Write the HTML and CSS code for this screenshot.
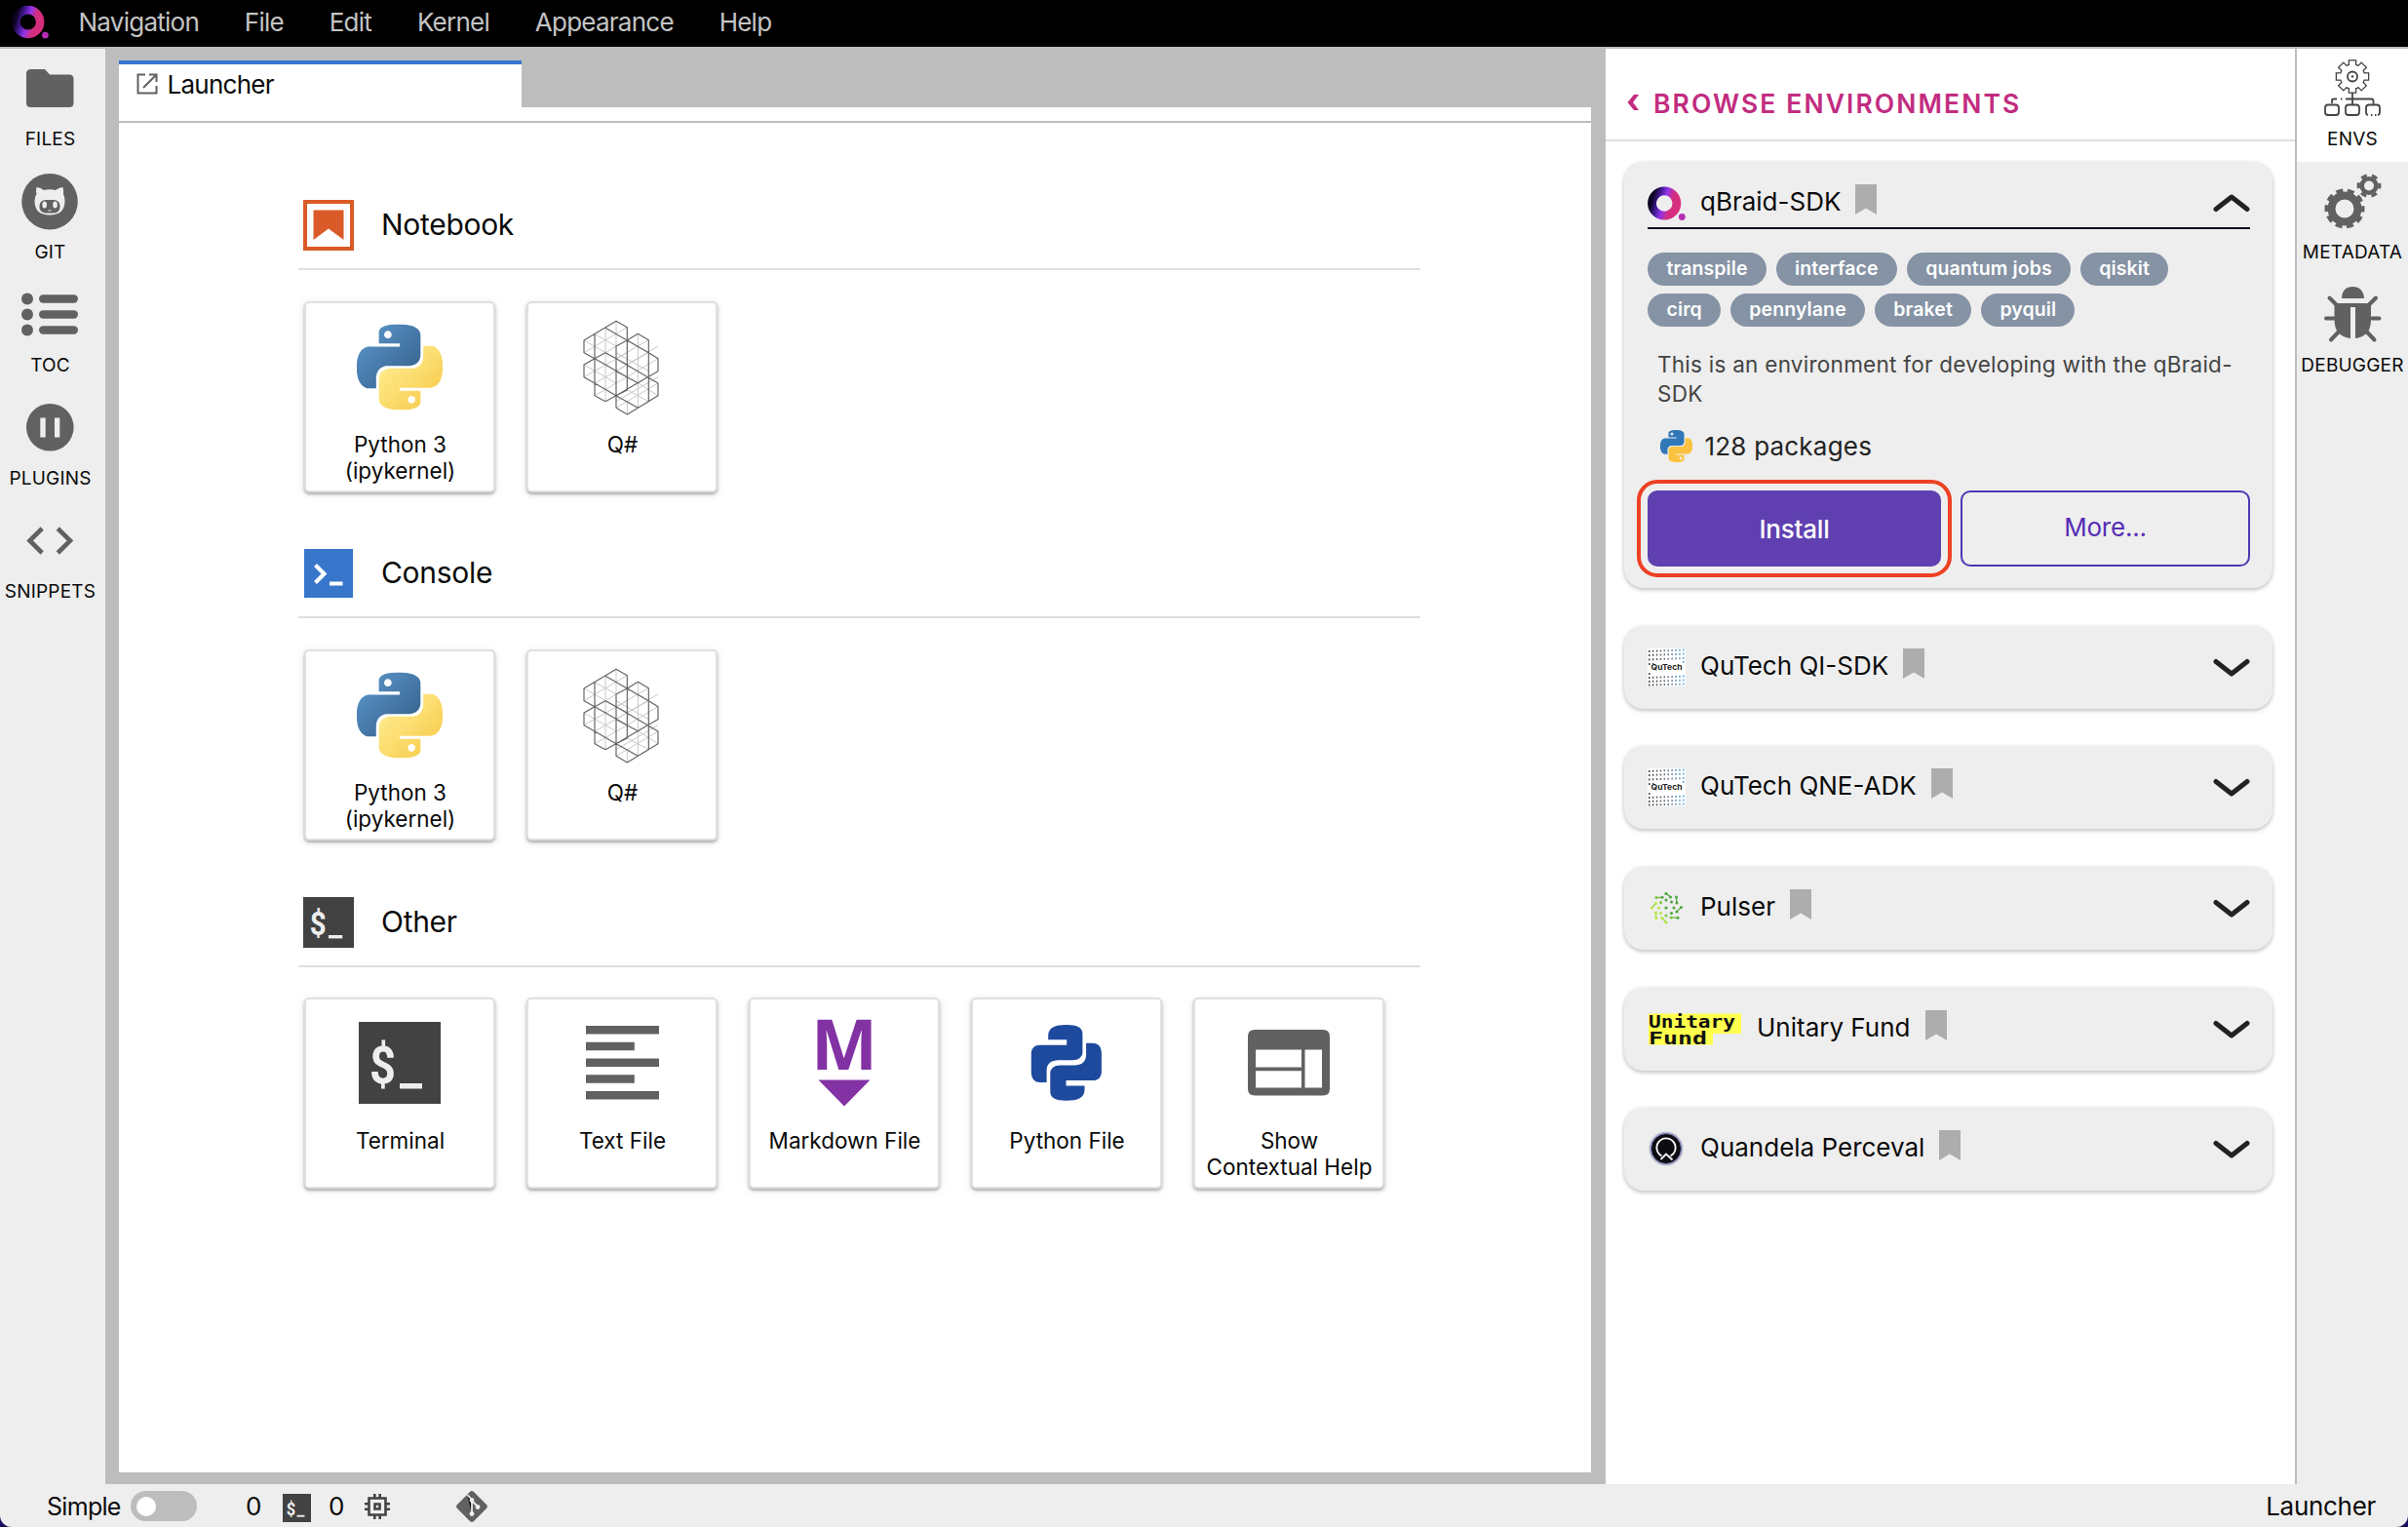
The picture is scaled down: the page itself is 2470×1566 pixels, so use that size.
FILE: index.html
```html
<!DOCTYPE html>
<html lang="en">
<head>
<meta charset="utf-8">
<title>Launcher</title>
<link rel="stylesheet" href="styles.css">
</head>
<body>
<svg class="defs" width="0" height="0">
  <defs>
    <linearGradient id="pyBlue" x1="0" y1="0" x2="1" y2="1"><stop offset="0" stop-color="#5f9bd0"/><stop offset="1" stop-color="#305a85"/></linearGradient>
    <linearGradient id="pyYellow" x1="0" y1="0" x2="1" y2="1"><stop offset=".2" stop-color="#ffe98a"/><stop offset="1" stop-color="#f5c741"/></linearGradient>
    <linearGradient id="ring" x1="0" y1=".3" x2="1" y2=".6"><stop offset="0" stop-color="#0b0320"/><stop offset=".28" stop-color="#4a1aa0"/><stop offset=".5" stop-color="#9333ea"/><stop offset=".75" stop-color="#d12f83"/><stop offset="1" stop-color="#d82d7c"/></linearGradient>
    <linearGradient id="pulse" x1="0" y1="1" x2="1" y2="0"><stop offset="0" stop-color="#c2ee4a"/><stop offset="1" stop-color="#2f8f3a"/></linearGradient>
    <linearGradient id="dots" x1="0" y1="0" x2="1" y2="0"><stop offset="0" stop-color="#444"/><stop offset=".5" stop-color="#778"/><stop offset="1" stop-color="#58b2e0"/></linearGradient>
    <path id="pyTop" d="M14.25.18l.9.2.73.26.59.3.45.32.34.34.25.34.16.33.1.3.04.26.02.2-.01.13V8.5l-.05.63-.13.55-.21.46-.26.38-.3.31-.33.25-.35.19-.35.14-.33.1-.3.07-.26.04-.21.02H8.77l-.69.05-.59.14-.5.22-.41.27-.33.32-.27.35-.2.36-.15.37-.1.35-.07.32-.04.27-.02.21v3.06H3.17l-.21-.03-.28-.07-.32-.12-.35-.18-.36-.26-.36-.36-.35-.46-.32-.59-.28-.73-.21-.88-.14-1.05-.05-1.23.06-1.22.16-1.04.24-.87.32-.71.36-.57.4-.44.42-.33.42-.24.4-.16.36-.1.32-.05.24-.01h.16l.06.01h8.16v-.83H6.18l-.01-2.75-.02-.37.05-.34.11-.31.17-.28.25-.26.31-.23.38-.2.44-.18.51-.15.58-.12.64-.1.71-.06.77-.04.84-.02 1.27.05zM7.95 2.16l-.23.33-.08.41.08.41.23.34.33.22.41.09.41-.09.33-.22.23-.34.08-.41-.08-.41-.23-.33-.33-.22-.41-.09-.41.09z"/>
    <path id="pyBottom" d="M21.04 6.11l.28.06.32.12.35.18.36.27.36.35.35.47.32.59.28.73.21.88.14 1.04.05 1.23-.06 1.23-.16 1.04-.24.86-.32.71-.36.57-.4.45-.42.33-.42.24-.4.16-.36.09-.32.05-.24.02-.16-.01h-8.22v.82h5.84l.01 2.76.02.36-.05.34-.11.31-.17.29-.25.25-.31.24-.38.2-.44.17-.51.15-.58.13-.64.09-.71.07-.77.04-.84.01-1.27-.04-1.07-.14-.9-.2-.73-.25-.59-.3-.45-.33-.34-.34-.25-.34-.16-.33-.1-.3-.04-.25-.02-.2.01-.13v-5.34l.05-.64.13-.54.21-.46.26-.38.3-.32.33-.24.35-.2.35-.14.33-.1.3-.06.26-.04.21-.02.13-.01h5.84l.69-.05.59-.14.5-.21.41-.28.33-.32.27-.35.2-.36.15-.36.1-.35.07-.32.04-.28.02-.21V6.07h2.09l.14.01zM14.57 20.36l-.23.33-.08.41.08.41.23.33.33.23.41.08.41-.08.33-.23.23-.33.08-.41-.08-.41-.23-.33-.33-.23-.41-.08-.41.08z"/>
    <symbol id="python" viewBox="0 0 24 24"><use href="#pyTop" fill="url(#pyBlue)"/><use href="#pyBottom" fill="url(#pyYellow)"/></symbol>
    <symbol id="pythonFlat" viewBox="0 0 24 24"><use href="#pyTop" fill="#3178b8"/><use href="#pyBottom" fill="#fbc23f"/></symbol>
    <symbol id="qsharp" viewBox="923 436 240 300">
      <path fill="none" stroke="#c9c9c9" stroke-width="3" d="M995 464V690M929 540L1062 462M962 483L1028 520L995 540M929 502L1028 558M929 577L962 558M929 615L1062 540M962 634L1062 577M962 672L1062 615M929 577L1028 634M1095 482V710M1028 443V520M1062 502L1128 540L1157 558M1028 558L1128 501M1028 597L1157 520M1062 615L1157 558M1028 540L1128 597M1028 690L1157 615M1028 710L1157 634M1062 655L1128 690M1095 633L1157 672M1062 690V730M1062 577L1128 540"/>
      <path fill="none" stroke="#666" stroke-width="3.6" stroke-linejoin="round" d="M929 502L1028 443L1062 462V502L1095 482L1128 501V540L1157 558V597L1125 615L1157 634V672L1062 730L1028 710V672L995 690L962 672V634L929 615V577L962 558L929 540ZM962 483V634L1028 672M995 464L1128 540M1062 502L1028 520V672L1062 655V502M962 558L995 540L1062 577M962 558L1062 615M1028 558L1125 615L1095 633L1028 597M1128 540V690L1095 710L1028 672L1062 655M962 558L929 540M1028 672L1125 615"/>
    </symbol>
    <symbol id="terminal" viewBox="0 0 84 84"><rect width="84" height="84" fill="#424242"/><text class="dollar" x="11" y="63" font-size="54" textLength="27" lengthAdjust="spacingAndGlyphs">$</text><rect x="42" y="63" width="23" height="5.5" fill="#eee"/></symbol>
    <symbol id="bookmark" viewBox="0 0 22 31"><path d="M0 0H22V31L11 24.500L0 31Z" fill="#adadad"/></symbol>
    <symbol id="down" viewBox="0 0 38 20"><path d="M3 3.500L19 16L35 3.500" fill="none" stroke="#222" stroke-width="5" stroke-linecap="round" stroke-linejoin="round"/></symbol>
    <symbol id="qbraid" viewBox="0 0 39 36"><circle cx="17.200" cy="17.500" r="12.700" fill="none" stroke="url(#ring)" stroke-width="8.800"/><circle cx="35.300" cy="31.500" r="3.400" fill="#b42fb4"/></symbol>
    <symbol id="qutech" viewBox="0 0 39 39"><rect width="39" height="39" fill="#fff"/>
      <path fill="none" stroke="url(#dots)" stroke-width="2" stroke-dasharray="1.500 2.400" d="M1 3L38 1.500M1 7L38 5.500M1 11.500L38 10M1 16L7 15.800M1 30L38 28.500M1 34L38 32.500M1 37.500L38 36.500M36 14L38 14M1 26L3 26"/>
      <text class="tech" x="3.500" y="21.500" font-size="7.500" textLength="32" lengthAdjust="spacingAndGlyphs">QuTech</text></symbol>
  </defs>
</svg>

<div class="app">
  <header class="menubar">
    <svg class="brand" viewBox="0 0 39 36"><use href="#qbraid"/></svg>
    <nav class="menu"><span>Navigation</span><span>File</span><span>Edit</span><span>Kernel</span><span>Appearance</span><span>Help</span></nav>
  </header>

  <div class="workspace">
    <aside class="side left">
      <div class="side-item">
        <svg viewBox="0 0 108 80"><path fill="#616161" d="M32 21H46L51 26.500H71Q75.500 26.500 75.500 31V55.500Q75.500 60 71 60H31.500Q27 60 27 55.500V25.500Q27 21 32 21Z"/></svg><span>FILES</span></div>
      <div class="side-item">
        <svg viewBox="0 0 108 80"><circle cx="51" cy="40.700" r="28.800" fill="#616161"/><path fill="#eee" d="M37.500 26Q41 26 45 29Q51 27.500 57 29Q61 26 64.500 26Q65.500 30 65 33Q66.500 36 66.500 40Q66.500 54.500 51 54.500Q35.500 54.500 35.500 40Q35.500 36 37.500 33Q36.500 30 37.500 26Z"/><rect x="40.500" y="39" width="21" height="13.500" rx="6" fill="#616161"/><ellipse cx="45.700" cy="44" rx="2.300" ry="3.600" fill="#eee"/><ellipse cx="56.500" cy="44" rx="2.300" ry="3.600" fill="#eee"/><path d="M49.500 49.500Q51 51 52.500 49.500" stroke="#eee" fill="none"/></svg><span>GIT</span></div>
      <div class="side-item">
        <svg viewBox="0 0 108 80"><g fill="#616161"><circle cx="28" cy="24.500" r="6"/><circle cx="28" cy="40.500" r="6"/><circle cx="28" cy="56.500" r="6"/><rect x="40" y="20.300" width="40" height="8.500" rx="4.200"/><rect x="40" y="36.300" width="40" height="8.500" rx="4.200"/><rect x="40" y="52.300" width="40" height="8.500" rx="4.200"/></g></svg><span>TOC</span></div>
      <div class="side-item">
        <svg viewBox="0 0 108 80"><circle cx="51.300" cy="40.300" r="24.300" fill="#616161"/><path fill="#eee" d="M41.300 30.500H46.700V50.500H41.300ZM56 30.500H61.300V50.500H56Z"/></svg><span>PLUGINS</span></div>
      <div class="side-item">
        <svg viewBox="0 0 108 80"><path fill="none" stroke="#616161" stroke-width="4.600" d="M43.200 28L30.500 40.500L43.200 53M59.300 28L72 40.500L59.300 53"/></svg><span>SNIPPETS</span></div>
    </aside>

    <main class="dock">
      <div class="tabs"><div class="tab">
        <svg class="tab-icon" viewBox="0 0 22 22" fill="none" stroke="#616161" stroke-width="2"><path d="M9 1.500H1.500V20.500H20.500V13M13 1.500H20.500V9M20.500 1.500L7 15"/></svg><span>Launcher</span></div></div>
      <div class="toolbar"></div>
      <div class="launcher">
        <section>
          <h2><svg viewBox="0 0 52 52"><rect x="2" y="2" width="48" height="48" fill="#fff" stroke="#da5b27" stroke-width="4"/><path fill="#da5b27" d="M10.500 10.500H41.500V41L26 29.500L10.500 41Z"/></svg><span>Notebook</span></h2>
          <div class="cards">
            <div class="card"><svg viewBox="0 0 100 100"><use href="#python" x="6" y="5.500" width="88" height="88"/></svg><p>Python 3<br>(ipykernel)</p></div>
            <div class="card"><svg viewBox="0 0 100 100"><use href="#qsharp" x="9" y="0" width="80" height="100"/></svg><p>Q#</p></div>
          </div>
        </section>
        <section>
          <h2><svg viewBox="0 0 52 52"><rect x="1" y="1" width="50" height="50" fill="#3776cb"/><path fill="none" stroke="#fff" stroke-width="4.200" d="M12.500 17.500L21.500 26.500L12.500 35.500"/><rect x="27" y="34.500" width="13.500" height="4" fill="#fff"/></svg><span>Console</span></h2>
          <div class="cards">
            <div class="card"><svg viewBox="0 0 100 100"><use href="#python" x="6" y="5.500" width="88" height="88"/></svg><p>Python 3<br>(ipykernel)</p></div>
            <div class="card"><svg viewBox="0 0 100 100"><use href="#qsharp" x="9" y="0" width="80" height="100"/></svg><p>Q#</p></div>
          </div>
        </section>
        <section>
          <h2><svg viewBox="0 0 52 52"><use href="#terminal" width="52" height="52"/></svg><span>Other</span></h2>
          <div class="cards">
            <div class="card"><svg viewBox="0 0 100 100"><use href="#terminal" x="8" y="7" width="84" height="84"/></svg><p>Terminal</p></div>
            <div class="card"><svg viewBox="0 0 100 100"><path fill="#616161" d="M13 11H88V19.500H13ZM13 27.700H62.800V36.200H13ZM13 44.500H88V53H13ZM13 61.200H62.800V69.700H13ZM13 78H88V86.500H13Z"/></svg><p>Text File</p></div>
            <div class="card"><svg viewBox="0 0 100 100"><text class="md" x="16" y="56" font-size="72" textLength="68" lengthAdjust="spacingAndGlyphs">M</text><path fill="#8332a4" d="M23.500 66.500H76.500L50 93.500Z"/></svg><p>Markdown File</p></div>
            <div class="card"><svg viewBox="0 0 100 100"><g fill="#1e4a9e" transform="translate(13 10)"><path id="half" d="M18.200 15.300V11C18.200 3 25 0 37.200 0C48 0 53.400 3 53.400 9V28.300C53.400 33 49 36.300 43.500 36.300H29C21 36.300 16.600 40 16.600 47V59H10C3 59 .8 54 .8 48V30C.8 24 4 20.700 10 20.700H37.200V15.300Z"/><use href="#half" transform="rotate(180 36.850 38.850)"/></g></svg><p>Python File</p></div>
            <div class="card"><svg viewBox="0 0 100 100"><path fill="#616161" fill-rule="evenodd" d="M15 15H85Q92 15 92 22V75.500Q92 82.500 85 82.500H15Q8 82.500 8 75.500V22Q8 15 15 15ZM16 35.500V53.500H63V35.500ZM16 57.200V74.500H63V57.200ZM66.500 35.500V74.500H84V35.500Z"/></svg><p>Show<br>Contextual Help</p></div>
          </div>
        </section>
      </div>
    </main>

    <aside class="envs">
      <h1><svg viewBox="0 0 14 18"><path fill="#c22c80" d="M8 1H13L7 9L13 17H8L1.500 9Z"/></svg><span>BROWSE ENVIRONMENTS</span></h1>
      <div class="env-list">
        <article class="env open">
          <div class="env-head"><svg class="logo" viewBox="0 0 39 39"><use href="#qbraid" y="2" width="39" height="36"/></svg><span class="name">qBraid-SDK</span><svg class="mark"><use href="#bookmark"/></svg><svg class="chev up" viewBox="0 0 38 20"><use href="#down"/></svg></div>
          <div class="tags"><div><b>transpile</b><b>interface</b><b>quantum jobs</b><b>qiskit</b></div><div><b>cirq</b><b>pennylane</b><b>braket</b><b>pyquil</b></div></div>
          <p class="desc">This is an environment for developing with the qBraid-<br>SDK</p>
          <div class="packages"><svg viewBox="0 0 24 24"><use href="#pythonFlat"/></svg><span>128 packages</span></div>
          <div class="actions"><button class="install">Install</button><button class="more">More...</button></div>
        </article>
        <article class="env"><div class="env-head"><svg class="logo" viewBox="0 0 39 39"><use href="#qutech"/></svg><span class="name">QuTech QI-SDK</span><svg class="mark"><use href="#bookmark"/></svg><svg class="chev" viewBox="0 0 38 20"><use href="#down"/></svg></div></article>
        <article class="env"><div class="env-head"><svg class="logo" viewBox="0 0 39 39"><use href="#qutech"/></svg><span class="name">QuTech QNE-ADK</span><svg class="mark"><use href="#bookmark"/></svg><svg class="chev" viewBox="0 0 38 20"><use href="#down"/></svg></div></article>
        <article class="env"><div class="env-head"><svg class="logo" viewBox="0 0 39 39"><g stroke="url(#pulse)" stroke-width="1.300" fill="none"><path d="M19 4L23.500 8M9 8.500L15 8.300M29.500 8L30 14.500M34.500 18.500L30 22.500M24 29L31 29.300M14.500 29L19 34M8.500 23L8.700 29M4 19L8.500 14.500"/></g><g fill="#4aa83c"><circle cx="19" cy="4.500" r="1.600"/><circle cx="23.500" cy="8" r="1.500"/><circle cx="15" cy="8.300" r="1.500"/><circle cx="29.500" cy="8" r="1.500"/><circle cx="30" cy="14" r="1.500"/><circle cx="34.500" cy="18.500" r="1.500"/><circle cx="30" cy="23" r="1.500"/><circle cx="19" cy="11" r="1.500"/><circle cx="24.500" cy="13" r="1.500"/><circle cx="27" cy="19" r="1.500"/><circle cx="19" cy="19" r="1.600"/><circle cx="24.500" cy="24.500" r="1.500"/><circle cx="31" cy="29.300" r="1.500"/></g><g fill="#7fc540"><circle cx="9" cy="8.500" r="1.500"/><circle cx="13.500" cy="13.500" r="1.500"/><circle cx="19" cy="27" r="1.500"/><circle cx="24" cy="29" r="1.500"/></g><g fill="#b4e640"><circle cx="8.500" cy="14.500" r="1.500"/><circle cx="4.500" cy="19" r="1.500"/><circle cx="11.500" cy="19" r="1.500"/><circle cx="8.500" cy="24" r="1.500"/><circle cx="13.500" cy="24.500" r="1.500"/><circle cx="8.700" cy="29.500" r="1.500"/><circle cx="15" cy="29.500" r="1.500"/><circle cx="19" cy="34" r="1.500"/></g></svg><span class="name">Pulser</span><svg class="mark"><use href="#bookmark"/></svg><svg class="chev" viewBox="0 0 38 20"><use href="#down"/></svg></div></article>
        <article class="env"><div class="env-head"><svg class="logo wide" viewBox="0 0 97 39"><path fill="#ffff4d" d="M1 3.500H96V24H67V35.500H1Z"/><text class="uf" x="1" y="17.500" font-size="18" textLength="89" lengthAdjust="spacingAndGlyphs">Unitary</text><text class="uf" x="1" y="35" font-size="18" textLength="60" lengthAdjust="spacingAndGlyphs">Fund</text></svg><span class="name">Unitary Fund</span><svg class="mark"><use href="#bookmark"/></svg><svg class="chev" viewBox="0 0 38 20"><use href="#down"/></svg></div></article>
        <article class="env"><div class="env-head"><svg class="logo" viewBox="0 0 39 39"><circle cx="19" cy="19" r="17.500" fill="#b9bcd0"/><circle cx="19" cy="19" r="15.500" fill="#0c0c10" stroke="#7b78b8"/><path fill="none" stroke="#f5f5f5" stroke-width="1.900" d="M14.500 26.500A9.600 9.600 0 1 1 23.500 26.500M13.500 30L19 24.500L25.500 30.500"/></svg><span class="name">Quandela Perceval</span><svg class="mark"><use href="#bookmark"/></svg><svg class="chev" viewBox="0 0 38 20"><use href="#down"/></svg></div></article>
      </div>
    </aside>

    <aside class="side right">
      <div class="side-item active">
        <svg viewBox="0 0 114 80"><defs><g id="cog8"><circle cx="57" cy="28.500" r="12"/><g id="t2"><rect x="54" y="12.500" width="6" height="32"/><rect x="41" y="25.500" width="32" height="6"/></g><use href="#t2" transform="rotate(45 57 28.500)"/></g></defs>
        <use href="#cog8" fill="none" stroke="#444" stroke-width="2.600"/><use href="#cog8" fill="#fff"/>
        <g fill="none" stroke="#444" stroke-width="1.800"><circle cx="57" cy="28.500" r="5"/><path d="M57 45V57M36 56V53Q36 51.500 38 51.500H41M50 51.500H76.500Q78.500 51.500 78.500 53.500V57"/><rect x="29" y="57.500" width="14" height="10.500" rx="3"/><rect x="50" y="57.500" width="14" height="10.500" rx="3"/><path d="M73 68Q71 67.500 71 65V60.500Q71 57.500 74 57.500H82Q85 57.500 85 60.500V65Q85 67.500 83 68M76 68H77.500M80 68H81.500M45 51.500H46.500"/></g><circle cx="57" cy="28.500" r="1.200" fill="#444"/></svg><span>ENVS</span></div>
      <div class="side-item">
        <svg viewBox="0 0 114 80"><g fill="none" stroke="#616161"><circle cx="49" cy="48" r="13.500" stroke-width="8"/><circle cx="49" cy="48" r="18.500" stroke-width="4" stroke-dasharray="7 4.624" stroke-dashoffset="3.500"/><circle cx="74" cy="24.500" r="7.300" stroke-width="4.600"/><circle cx="74" cy="24.500" r="10.800" stroke-width="3.200" stroke-dasharray="6 5.310" stroke-dashoffset="3"/></g></svg><span>METADATA</span></div>
      <div class="side-item">
        <svg viewBox="0 0 114 80"><path fill="#616161" d="M46 24Q46.500 12 57.300 12Q68 12 69 24ZM38.500 29H76V46Q76 63 60 65V33H55V65Q38.500 63 38.500 46Z"/><path stroke="#616161" stroke-width="4" stroke-linecap="round" d="M33.500 23.500L41 31M81 23.500L73.500 31M30 44.500H38M77 44.500H84.500M35 66.500L44 57M79.500 66.500L70.500 57"/></svg><span>DEBUGGER</span></div>
    </aside>
  </div>

  <footer class="status">
    <span class="simple">Simple</span><i class="toggle"></i>
    <span class="n1">0</span><svg class="st-term" viewBox="0 0 84 84"><use href="#terminal"/></svg><span class="n2">0</span>
    <svg class="st-chip" viewBox="0 0 26 26"><path fill="none" stroke="#424242" stroke-width="2.600" d="M4.500 4.500H21.500V21.500H4.500ZM10.300 0V4M15.700 0V4M10.300 22V26M15.700 22V26M0 10.300H4M0 15.700H4M22 10.300H26M22 15.700H26M10.500 10.500H15.500V15.500H10.500Z"/></svg>
    <svg class="st-git" viewBox="0 0 32 32"><path fill="#616161" d="M14.200 .8Q16 -.600 17.800 .8L31.200 14.200Q32.500 16 31.200 17.800L17.800 31.200Q16 32.500 14.200 31.200L.8 17.800Q-.500 16 .8 14.200Z"/><path d="M11.500 4L16 9V24M16 10L22 16" stroke="#eee" stroke-width="1.800"/><g fill="#eee"><circle cx="16" cy="9.500" r="2.400"/><circle cx="16" cy="23.500" r="2.400"/><circle cx="22" cy="16.500" r="2.400"/></g></svg>
    <span class="where">Launcher</span>
  </footer>
</div>
</body>
</html>
```
FILE: styles.css
```css
* { box-sizing: border-box; }
html { background: #1d0c5c; }
body { margin: 0; font-family: Inter, "Liberation Sans", sans-serif; font-size: 26px; color: #0a0a0a; }
.defs { position: absolute; }
svg { display: block; flex: none; }
.app { width: 2470px; height: 1566px; display: flex; flex-direction: column; background: #eee; border-radius: 0 0 12px 12px; overflow: hidden; }
.dollar { font-family: Roboto, sans-serif; font-weight: 700; fill: #eee; }
.tech { font-family: Inter, sans-serif; font-weight: 700; fill: #222; }
.md { font-family: "Open Sans", sans-serif; font-weight: 700; fill: #8332a4; }
.uf { font-family: "DejaVu Sans Mono", monospace; font-weight: 700; fill: #111; }

.menubar { height: 50px; flex: none; display: flex; background: #000; border-bottom: 2px solid #bdbdbd; padding-left: 12px; color: #c4c4c4; }
.brand { width: 38px; height: 36px; margin-top: 5px; }
.menu { display: flex; gap: 46.800px; margin-left: 30.500px; line-height: 45px; letter-spacing: -.75px; }

.workspace { flex: 1; min-height: 0; display: flex; background: #bdbdbd; }
.side { flex: none; background: #eee; }
.side.left { width: 108px; }
.side.right { width: 116px; border-left: 2px solid #bdbdbd; }
.side-item { height: 116px; display: flex; flex-direction: column; align-items: center; }
.side-item.active { background: #fff; }
.side-item svg { width: 100%; height: 80px; }
.side-item span { font-size: 19px; line-height: 25px; letter-spacing: .2px; white-space: nowrap; }
.side.left .side-item span { margin-right: 5px; }

.dock { flex: 1; display: flex; flex-direction: column; padding: 12px 15px 12px 14px; }
.tabs { height: 48px; flex: none; display: flex; }
.tab { width: 413px; height: 48px; background: #fff; border-top: 4px solid #3674cf; padding: 7px 0 0 18px; display: flex; gap: 9.500px; line-height: 28px; letter-spacing: -.75px; }
.tab-icon { width: 22px; height: 22px; margin-top: 2px; }
.toolbar { height: 16px; flex: none; background: #fff; border-bottom: 2px solid #bdbdbd; }
.launcher { flex: 1; background: #fff; padding: 69px 175px 0 184px; }
section { height: 357.400px; }
h2 { margin: 0; height: 82px; border-bottom: 2px solid #e0e0e0; display: flex; gap: 28px; padding: 10px 0 0 5px; font-size: 30px; font-weight: 400; line-height: 51px; letter-spacing: -.3px; }
h2 svg { width: 52px; height: 52px; }
.cards { display: flex; gap: 32px; padding: 31.500px 0 0 6px; }
.card { width: 196px; height: 196px; flex: none; border: 2px solid #e0e0e0; border-radius: 5px; background: #fff; box-shadow: 0 2px 3px rgba(0,0,0,.28), 0 2px 8px rgba(0,0,0,.1); display: flex; flex-direction: column; align-items: center; padding-top: 16px; }
.card svg { width: 100px; height: 100px; overflow: visible; }
.card p { margin: 15px 0 0 1px; font-size: 22.500px; line-height: 27px; text-align: center; white-space: nowrap; }

.envs { width: 707px; flex: none; background: #fff; }
h1 { margin: 0; height: 95px; border-bottom: 2px solid #e0e0e0; display: flex; gap: 14px; padding: 40px 0 0 21px; font-size: 26.500px; line-height: 33px; font-weight: 600; letter-spacing: 2.100px; color: #c22c80; }
h1 svg { width: 14px; height: 18px; margin-top: 6px; }
.env-list { padding: 21px 23px 0 19px; display: flex; flex-direction: column; gap: 38.700px; }
.env { background: #eee; border-radius: 20px; height: 85px; padding: 0 23px 0 24px; box-shadow: 0 2px 4px rgba(0,0,0,.22), 0 0 5px rgba(0,0,0,.06); }
.env.open { height: 437px; }
.env-head { display: flex; align-items: flex-start; padding-top: 23px; }
.open .env-head { height: 69px; border-bottom: 2px solid #0c0c24; }
.logo { width: 39px; height: 39px; margin-right: 15px; }
.logo.wide { width: 97px; }
.name { line-height: 36px; }
.mark { width: 22px; height: 31px; margin-left: 15px; }
.chev { width: 38px; height: 20px; margin: 10px 0 0 auto; }
.chev.up { margin-top: 9px; transform: scaleY(-1); }
.tags { padding-top: 24px; display: flex; flex-direction: column; gap: 8px; }
.tags div { display: flex; gap: 10px; }
.tags b { height: 34px; border-radius: 17px; background: #8593a5; color: #fff; padding: 0 19px 0 19.500px; font-size: 19.500px; font-weight: 600; line-height: 32px; letter-spacing: .1px; }
.desc { margin: 24px 0 0 10px; font-size: 22.500px; line-height: 30px; letter-spacing: .26px; color: #444; white-space: nowrap; }
.packages { display: flex; gap: 12.500px; margin: 22px 0 0 13px; line-height: 34px; letter-spacing: .2px; color: #222; }
.packages svg { width: 33px; height: 33px; }
.actions { display: flex; gap: 20px; margin-top: 28px; }
button { height: 78px; border-radius: 10px; font: inherit; padding: 0; letter-spacing: -.2px; }
.install { width: 301px; border: 0; background: #6040b0; color: #fff; font-weight: 500; outline: 4px solid #ee4023; outline-offset: 7px; }
.more { width: 297px; border: 2px solid #5036b4; background: none; color: #562db5; padding-bottom: 3px; }

.status { height: 44px; flex: none; display: flex; line-height: 44px; padding: 1px 33px 0 48px; letter-spacing: -.3px; }
.simple { width: 77px; font-size: 25px; letter-spacing: -.7px; }
.toggle { width: 68px; height: 31px; border-radius: 16px; background: #bdbdbd; margin: 6px 0 0 9px; padding: 6px; }
.toggle::before { content: ""; display: block; width: 20px; height: 20px; border-radius: 50%; background: #fff; }
.n1 { margin-left: 50px; }
.st-term { width: 29px; height: 29px; margin: 9px 18px 0 22px; }
.st-chip { width: 26px; height: 26px; margin: 9px 0 0 21px; }
.st-git { width: 32px; height: 32px; margin: 6px 0 0 68px; }
.where { margin-left: auto; }
```
